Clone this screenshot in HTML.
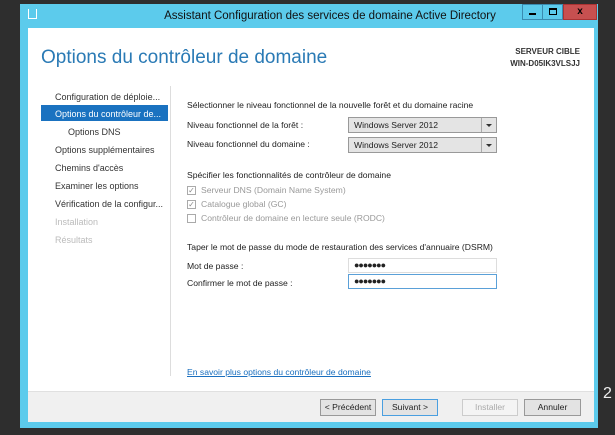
<!DOCTYPE html>
<html><head><meta charset="utf-8"><style>
*{margin:0;padding:0;box-sizing:border-box}
body{width:615px;height:435px;background:#2e2e2e;font-family:"Liberation Sans",sans-serif;position:relative;overflow:hidden;font-size:9px;color:#222}
.a{position:absolute}
.win{left:20px;top:4px;width:578px;height:424px;background:#5ccbec}
.cont{left:28px;top:28px;width:566px;height:394px;background:#fff}
.title{left:20px;top:10px;width:620px;text-align:center;font-size:11.5px;color:#111}
.wb{top:4px;height:16px;border:1px solid #3a8bb0}
.nav{left:55px;font-size:9px;color:#333}
.lbl{font-size:8.6px;color:#222}
.dd{left:348px;width:149px;height:16px;border:1px solid #999;background:#e4e4e4;font-size:8.6px;padding:2px 5px}
.dd:after{content:"";position:absolute;right:0;top:0;width:14px;height:14px;border-left:1px solid #aaa}
.ar{position:absolute;right:4px;top:6px;border-left:3px solid transparent;border-right:3px solid transparent;border-top:3px solid #333}
.cb{left:187px;width:9px;height:9px;border:1px solid #aaa;background:#fff;font-size:8px;line-height:7px;color:#888;text-align:center}
.pw{left:348px;width:149px;height:15px;border:1px solid #ddd;font-size:9px;padding:1px 5px;letter-spacing:-1px}
.btn{top:399px;height:17px;border:1px solid #999;background:#e3e3e3;font-size:8.6px;text-align:center;line-height:15px}
</style></head><body>
<div class="a win"></div>
<div class="a" style="left:28px;top:9px;width:9px;height:10px;border:1px solid #fff;border-top:none"></div>
<div class="a title">Assistant Configuration des services de domaine Active Directory</div>
<div class="a wb" style="left:522px;width:21px"><div class="a" style="left:6px;top:8px;width:7px;height:2px;background:#000"></div></div>
<div class="a wb" style="left:542px;width:21px"><div class="a" style="left:6px;top:3px;width:8px;height:7px;border:1px solid #000;border-top-width:2px"></div></div>
<div class="a wb" style="left:563px;width:34px;background:#c75050;border-color:#a33;color:#000;font-weight:bold;font-size:10px;text-align:center;line-height:13px">x</div>
<div class="a cont"></div>
<div class="a" style="left:41px;top:47px;font-size:19px;color:#2a7ab5;font-weight:300">Options du contrôleur de domaine</div>
<div class="a" style="left:480px;top:46px;width:100px;text-align:right;font-size:8px;color:#333;line-height:12px;font-weight:bold">SERVEUR CIBLE<br>WIN-D05IK3VLSJJ</div>
<div class="a" style="left:170px;top:86px;width:1px;height:290px;background:#ddd"></div>
<div class="a nav" style="top:92px">Configuration de déploie...</div>
<div class="a" style="left:41px;top:105px;width:127px;height:16px;background:#1a72c0"></div>
<div class="a nav" style="top:109px;color:#fff">Options du contrôleur de...</div>
<div class="a nav" style="top:127px;left:68px">Options DNS</div>
<div class="a nav" style="top:145px">Options supplémentaires</div>
<div class="a nav" style="top:163px">Chemins d'accès</div>
<div class="a nav" style="top:181px">Examiner les options</div>
<div class="a nav" style="top:199px">Vérification de la configur...</div>
<div class="a nav" style="top:217px;color:#bbb">Installation</div>
<div class="a nav" style="top:235px;color:#bbb">Résultats</div>
<div class="a lbl" style="left:187px;top:100px">Sélectionner le niveau fonctionnel de la nouvelle forêt et du domaine racine</div>
<div class="a lbl" style="left:187px;top:120px">Niveau fonctionnel de la forêt :</div>
<div class="a lbl" style="left:187px;top:139px">Niveau fonctionnel du domaine :</div>
<div class="a dd" style="top:117px">Windows Server 2012<span class="ar"></span></div>
<div class="a dd" style="top:137px">Windows Server 2012<span class="ar"></span></div>
<div class="a lbl" style="left:187px;top:170px">Spécifier les fonctionnalités de contrôleur de domaine</div>
<div class="a cb" style="top:186px">✓</div><div class="a lbl" style="left:201px;top:185px;color:#999">Serveur DNS (Domain Name System)</div>
<div class="a cb" style="top:200px">✓</div><div class="a lbl" style="left:201px;top:199px;color:#999">Catalogue global (GC)</div>
<div class="a cb" style="top:214px"></div><div class="a lbl" style="left:201px;top:213px;color:#999">Contrôleur de domaine en lecture seule (RODC)</div>
<div class="a lbl" style="left:187px;top:242px">Taper le mot de passe du mode de restauration des services d'annuaire (DSRM)</div>
<div class="a lbl" style="left:187px;top:261px">Mot de passe :</div>
<div class="a lbl" style="left:187px;top:278px">Confirmer le mot de passe :</div>
<div class="a pw" style="top:258px">●●●●●●●</div>
<div class="a pw" style="top:274px;border-color:#5aa0d8">●●●●●●●</div>
<div class="a" style="left:187px;top:367px;font-size:8.6px;color:#1a6fbf;text-decoration:underline">En savoir plus options du contrôleur de domaine</div>
<div class="a" style="left:28px;top:391px;width:566px;height:31px;background:#f0f0f0;border-top:1px solid #e0e0e0"></div>
<div class="a btn" style="left:320px;width:56px">&lt; Précédent</div>
<div class="a btn" style="left:382px;width:56px;border-color:#4a9fe0">Suivant &gt;</div>
<div class="a btn" style="left:462px;width:56px;color:#aaa;background:#f4f4f4;border-color:#ccc">Installer</div>
<div class="a btn" style="left:524px;width:57px">Annuler</div>
<div class="a" style="left:603px;top:385px;color:#eee;font-size:16px">2</div>
</body></html>
